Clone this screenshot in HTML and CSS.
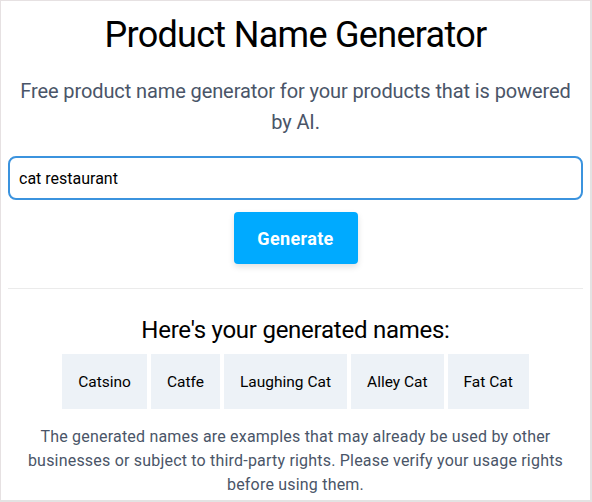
FILE: index.html
```html
<!DOCTYPE html>
<html lang="en">
<head>
<meta charset="utf-8">
<title>Product Name Generator</title>
<link rel="stylesheet" href="styles.css">
</head>
<body>
<div class="frame">
  <main class="page">
    <h1 class="title">Product Name Generator</h1>
    <p class="subtitle">Free product name generator for your products that is powered by AI.</p>
    <input class="prompt" type="text" value="cat restaurant">
    <div class="actions">
      <button class="generate" type="button">Generate</button>
    </div>
    <hr class="divider">
    <h2 class="results-title">Here's your generated names:</h2>
    <ul class="names">
      <li class="name">Catsino</li>
      <li class="name">Catfe</li>
      <li class="name">Laughing Cat</li>
      <li class="name">Alley Cat</li>
      <li class="name">Fat Cat</li>
    </ul>
    <p class="disclaimer">The generated names are examples that may already be used by other businesses or subject to third-party rights. Please verify your usage rights before using them.</p>
  </main>
</div>
</body>
</html>
```

FILE: styles.css
```css
* { box-sizing: border-box; }
html, body { margin: 0; padding: 0; background: #fff; }
body {
  font-family: Roboto, "Noto Sans", sans-serif;
  color: #000;
}
.frame {
  width: 592px;
  height: 502px;
  border-top: 1px solid #e6e1e2;
  border-left: 1px solid #e6e1e2;
  border-right: 2px solid #e3e3e3;
  border-bottom: 2px solid #e3e3e3;
  overflow: hidden;
}
.page {
  padding: 0 7px;
  display: flex;
  flex-direction: column;
}
.title {
  margin: 12px 0 0;
  font-size: 36px;
  line-height: 44px;
  font-weight: 400;
  text-align: center;
  letter-spacing: -0.7px;
}
.subtitle {
  margin: 19px 0 0;
  font-size: 20px;
  line-height: 31px;
  color: #4a5568;
  text-align: center;
  letter-spacing: -0.1px;
}
.prompt {
  margin-top: 18px;
  width: 100%;
  height: 44px;
  border: 2px solid #3b93de;
  border-radius: 8px;
  padding: 0 9px;
  font-family: Roboto, "Noto Sans", sans-serif;
  font-size: 16px;
  color: #000;
  outline: none;
}
.actions {
  display: flex;
  justify-content: center;
  margin-top: 12px;
}
.generate {
  width: 124px;
  height: 52px;
  border: none;
  border-radius: 4px;
  background: #00aaff;
  color: #fff;
  font-family: Roboto, "Noto Sans", sans-serif;
  font-size: 18px;
  font-weight: 700;
  letter-spacing: 0.35px;
  box-shadow: 0 3px 6px rgba(0, 0, 0, 0.12);
}
.divider {
  margin: 24px 0 0;
  border: none;
  border-top: 1px solid #ebebeb;
}
.results-title {
  margin: 26px 0 0;
  font-size: 24px;
  line-height: 30px;
  font-weight: 400;
  text-align: center;
  letter-spacing: -0.25px;
}
.names {
  list-style: none;
  margin: 9px 0 0;
  padding: 0;
  display: flex;
  justify-content: center;
  gap: 4px;
}
.name {
  background: #edf2f7;
  height: 55px;
  padding: 0 16px;
  display: flex;
  align-items: center;
  font-size: 15.5px;
}
.disclaimer {
  margin: 16px 0 0;
  font-size: 16px;
  line-height: 24px;
  color: #4a5568;
  text-align: center;
  letter-spacing: 0.2px;
}
```
